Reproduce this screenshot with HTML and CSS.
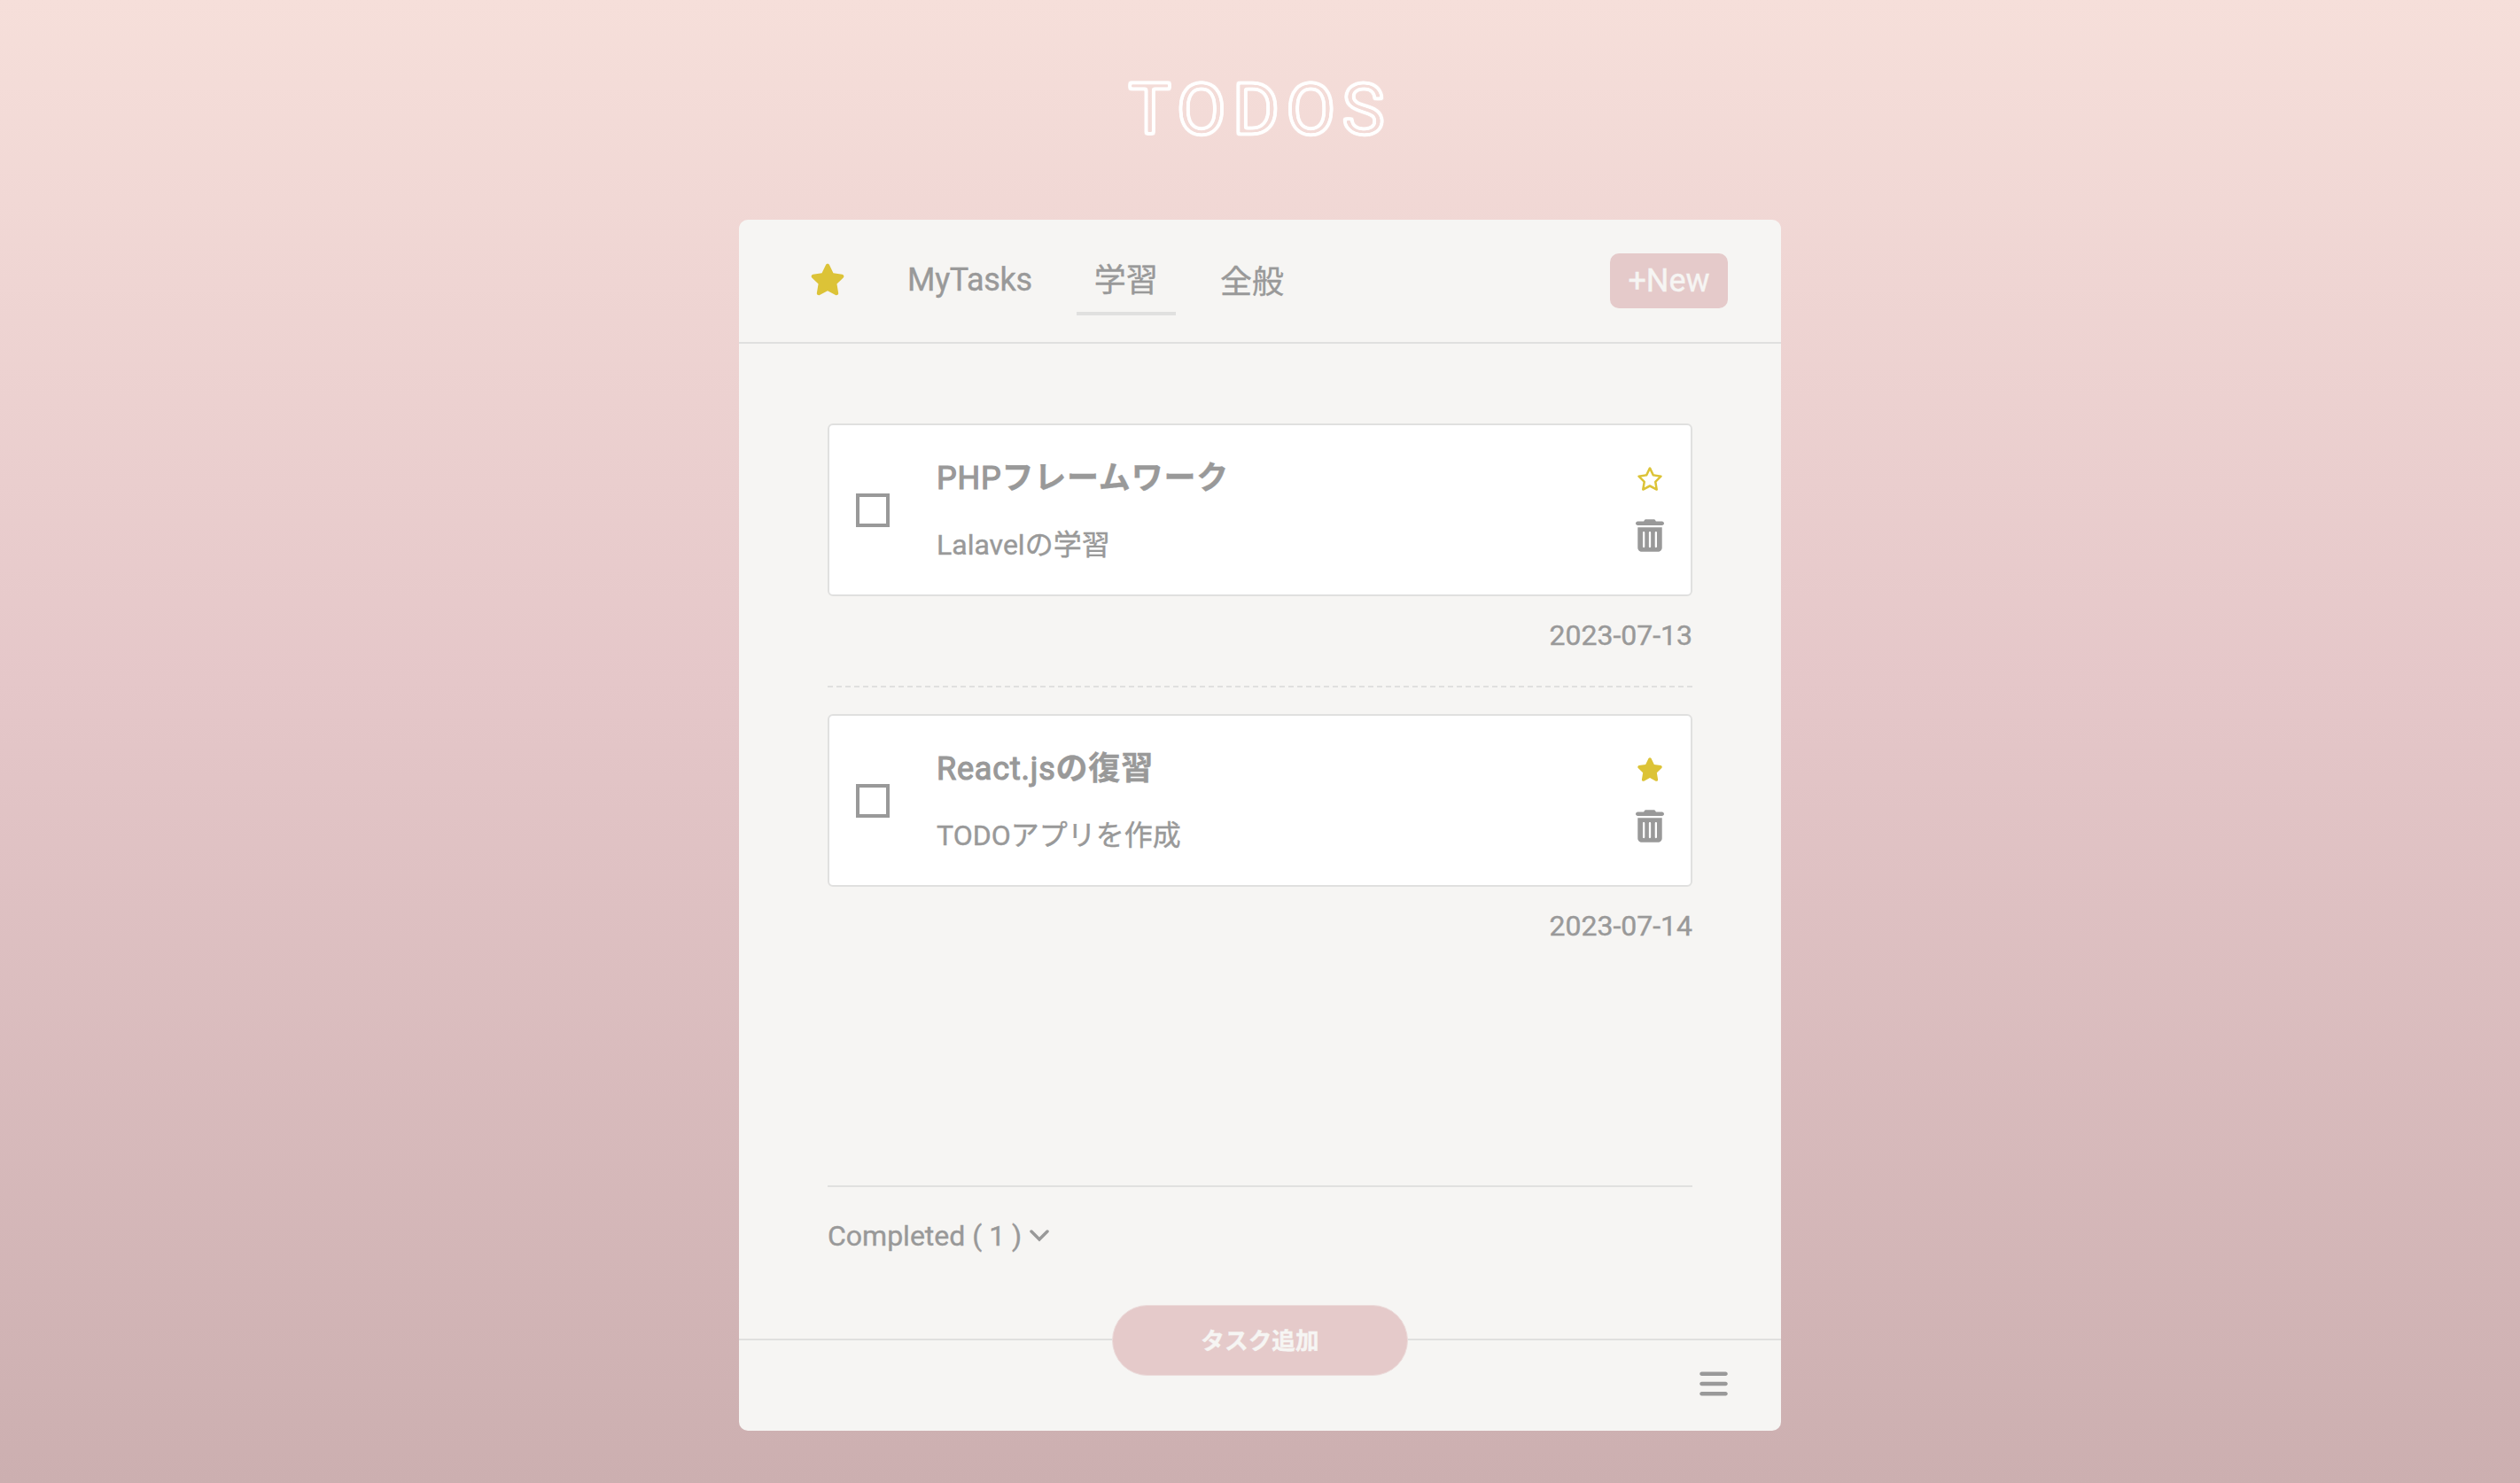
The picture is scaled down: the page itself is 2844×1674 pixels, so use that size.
FILE: index.html
```html
<!DOCTYPE html>
<html lang="ja">

<head>
    <meta charset="UTF-8">
    <meta name="viewport" content="width=device-width, initial-scale=1.0">
    <title>TODOS</title>
    <link rel="stylesheet" href="styles.css">
</head>

<body>
    <!-- アイコン -->
    <svg class="sprite" width="0" height="0">
        <!-- 文字の輪郭だけを残す -->
        <filter id="outline" x="-5%" y="-5%" width="110%" height="110%">
            <feGaussianBlur stdDeviation="1.2"/>
            <feComponentTransfer>
                <feFuncA type="table" tableValues="0 .3 .6 .9 1 1 1 1 1 1 1 1 1 1 1 1 1 1 1 1 1 1 1 1 1 1 1 1 1 1 1 1 1 1 1 1 1 1 1 1 1 1 1 1 1 1 .85 .6 .35 0 0"/>
            </feComponentTransfer>
        </filter>
        <symbol id="star" viewBox="0 0 576 512"><path d="M316.9 18C311.6 7 300.4 0 288.1 0s-23.4 7-28.8 18L195 150.3 51.4 171.5c-12 1.8-22 10.2-25.7 21.7s-.7 24.2 7.9 32.7L137.8 329 113.2 474.7c-2 12 3 24.2 12.9 31.3s23 8 33.8 2.3l128.3-68.5 128.3 68.5c10.8 5.7 23.9 4.9 33.8-2.3s14.9-19.3 12.9-31.3L438.5 329 542.7 225.9c8.6-8.5 11.7-21.2 7.9-32.7s-13.7-19.9-25.7-21.7L381.2 150.3 316.9 18z"/></symbol>
        <symbol id="star-line" viewBox="0 0 576 512"><path d="M287.9 0c9.2 0 17.6 5.2 21.6 13.5l68.6 141.3 153.2 22.6c9 1.3 16.5 7.6 19.3 16.3s.5 18.1-5.9 24.5L433.6 328.4l26.2 155.6c1.5 9-2.2 18.1-9.7 23.5s-17.3 6-25.3 1.7l-137-73.2L151 509.1c-8.1 4.3-17.9 3.7-25.3-1.7s-11.2-14.5-9.7-23.5l26.2-155.6L31.1 218.2c-6.5-6.4-8.7-15.9-5.9-24.5s10.3-14.9 19.3-16.3l153.2-22.6L266.3 13.5C270.4 5.2 278.7 0 287.9 0zm0 79L235.4 187.2c-3.5 7.1-10.2 12.1-18.1 13.3L99 217.9 184.9 303c5.5 5.5 8.1 13.3 6.8 21L171.4 443.7l105.2-56.2c7.1-3.8 15.6-3.8 22.6 0l105.2 56.2L384.2 324.1c-1.3-7.7 1.2-15.5 6.8-21l85.9-85.1L358.6 200.5c-7.8-1.2-14.6-6.1-18.1-13.3L287.9 79z"/></symbol>
        <symbol id="trash" viewBox="0 0 448 512"><path d="M135.2 17.7C140.6 6.8 151.7 0 163.8 0H284.2c12.1 0 23.2 6.8 28.6 17.7L320 32h96c17.7 0 32 14.3 32 32s-14.3 32-32 32H32C14.3 96 0 81.7 0 64S14.3 32 32 32h96l7.2-14.3zM32 128H416V448c0 35.3-28.7 64-64 64H96c-35.3 0-64-28.7-64-64V128zm96 64c-8.8 0-16 7.2-16 16V432c0 8.8 7.2 16 16 16s16-7.2 16-16V208c0-8.8-7.2-16-16-16zm96 0c-8.8 0-16 7.2-16 16V432c0 8.8 7.2 16 16 16s16-7.2 16-16V208c0-8.8-7.2-16-16-16zm96 0c-8.8 0-16 7.2-16 16V432c0 8.8 7.2 16 16 16s16-7.2 16-16V208c0-8.8-7.2-16-16-16z"/></symbol>
    </svg>

    <h1 class="title">TODOS</h1>

    <main class="todo">
        <header class="todo_header">
            <ul class="tabs">
                <li class="tab tab_star"><svg><use href="#star"/></svg></li>
                <li class="tab tab_en">MyTasks</li>
                <li class="tab active">学習</li>
                <li class="tab">全般</li>
            </ul>
            <button class="new_btn">+New</button>
        </header>

        <section class="todo_body">
            <ul class="task_list">
                <li class="task">
                    <div class="task_box">
                        <span class="check"></span>
                        <div class="task_text">
                            <h2><span class="en">PHP</span>フレームワーク</h2>
                            <p>Lalavelの学習</p>
                        </div>
                        <div class="task_icons">
                            <svg class="icon_star"><use href="#star-line"/></svg>
                            <svg class="icon_trash"><use href="#trash"/></svg>
                        </div>
                    </div>
                    <p class="date">2023-07-13</p>
                </li>
                <li class="task">
                    <div class="task_box">
                        <span class="check"></span>
                        <div class="task_text">
                            <h2><span class="en">React.js</span>の復習</h2>
                            <p>TODOアプリを作成</p>
                        </div>
                        <div class="task_icons">
                            <svg class="icon_star"><use href="#star"/></svg>
                            <svg class="icon_trash"><use href="#trash"/></svg>
                        </div>
                    </div>
                    <p class="date">2023-07-14</p>
                </li>
            </ul>
            <div class="completed">
                <span>Completed ( 1 )</span>
                <svg class="icon_down" viewBox="0 0 22 14"><path d="M2 2l9 9 9-9"/></svg>
            </div>
        </section>

        <footer class="todo_footer">
            <button class="add_btn">タスク追加</button>
            <svg class="icon_menu" viewBox="0 0 448 512"><path d="M0 96C0 78.3 14.3 64 32 64H416c17.7 0 32 14.3 32 32s-14.3 32-32 32H32C14.3 128 0 113.7 0 96zM0 256c0-17.7 14.3-32 32-32H416c17.7 0 32 14.3 32 32s-14.3 32-32 32H32c-17.7 0-32-14.3-32-32zM448 416c0 17.7-14.3 32-32 32H32c-17.7 0-32-14.3-32-32s14.3-32 32-32H416c17.7 0 32 14.3 32 32z"/></svg>
        </footer>
    </main>
</body>

</html>
```

FILE: styles.css
```css
* {
    margin: 0;
    padding: 0;
    box-sizing: border-box;
}

body {
    height: 1674px;
    overflow: hidden;
    font-family: Roboto, "Noto Sans CJK JP", sans-serif;
    font-size: 32px;
    color: #999;
    background: linear-gradient(#f6dfda, #e5c7c9 46%, #ccafb0);
    -webkit-text-stroke: 0.4px;
}

li {
    list-style: none;
}

svg {
    display: block;
    fill: currentColor;
}

button {
    border: none;
    color: #f6f5f3;
    background: #e5caca;
    font-family: inherit;
    -webkit-text-stroke: 0.4px;
}

.sprite {
    position: absolute;
}

.title {
    height: 248px;
    padding-top: 77px;
    text-align: center;
    font-size: 80px;
    font-weight: 400;
    line-height: 94px;
    letter-spacing: 8px;
    color: #fff;
    filter: url(#outline);
}

.todo {
    display: flex;
    flex-direction: column;
    width: 1176px;
    height: 1367px;
    margin: 0 auto;
    border-radius: 10px;
    background: #f6f5f3;
}

.todo_header {
    display: flex;
    justify-content: space-between;
    align-items: center;
    height: 140px;
    padding: 0 60px;
    border-bottom: 2px solid #e0e0df;
}

.tabs {
    display: flex;
    align-items: center;
    gap: 30px;
}

.tab {
    padding: 12px 20px 8px;
    font-size: 36px;
    line-height: 54px;
}

.tab_en {
    padding: 9px 20px 11px;
    letter-spacing: -0.3px;
}

.tab.active {
    border-bottom: 4px solid #e0e0df;
}

.tab_star svg {
    width: 40px;
    height: 37px;
    margin-bottom: 7px;
    color: #dcc337;
}

.new_btn {
    width: 133px;
    height: 62px;
    border-radius: 10px;
    font-size: 36px;
}

.todo_body {
    display: flex;
    flex: 1;
    flex-direction: column;
    justify-content: space-between;
    padding: 90px 100px 0;
}

.task + .task {
    margin-top: 36px;
    padding-top: 30px;
    border-top: 2px dashed #e0e0df;
}

.task_box {
    display: flex;
    align-items: center;
    height: 195px;
    padding: 0 30px;
    border: 2px solid #e0e0df;
    border-radius: 6px;
    background: #fff;
}

.check {
    width: 38px;
    height: 38px;
    border: 4px solid #999;
}

.task_text {
    flex: 1;
    margin-left: 53px;
}

.task_text h2 {
    font-size: 36px;
    font-weight: 700;
    line-height: 54px;
    letter-spacing: 0.8px;
}

/* 英字は細めのまま少しだけ太らせる */
.task_text .en {
    font-weight: 400;
    -webkit-text-stroke: 1.2px;
}

.task_text p {
    margin-top: 24px;
    line-height: 48px;
}

.task_icons {
    display: flex;
    flex-direction: column;
    align-items: center;
    gap: 32px;
    padding-bottom: 2px;
}

.icon_star {
    width: 30px;
    height: 27px;
    color: #dcc337;
}

.icon_trash {
    width: 32px;
    height: 37px;
}

.date {
    margin-top: 23px;
    line-height: 42px;
    text-align: right;
}

.completed {
    display: flex;
    align-items: center;
    gap: 9px;
    height: 173px;
    padding-bottom: 62px;
    border-top: 2px solid #e0e0df;
}

.icon_down {
    width: 22px;
    height: 14px;
    fill: none;
    stroke: #999;
    stroke-width: 3.5;
    stroke-linecap: round;
}

.todo_footer {
    position: relative;
    display: flex;
    justify-content: flex-end;
    height: 104px;
    padding: 31px 60px 0;
    border-top: 2px solid #e0e0df;
}

/* 境界線の上に重ねる */
.add_btn {
    position: absolute;
    top: -40px;
    left: 50%;
    width: 334px;
    height: 80px;
    padding-bottom: 4px;
    border: 1px solid #ecdcdb;
    border-radius: 40px;
    font-size: 26.66px;
    font-weight: 700;
    transform: translateX(-50%);
}

.icon_menu {
    width: 32px;
    height: 36px;
}
```
